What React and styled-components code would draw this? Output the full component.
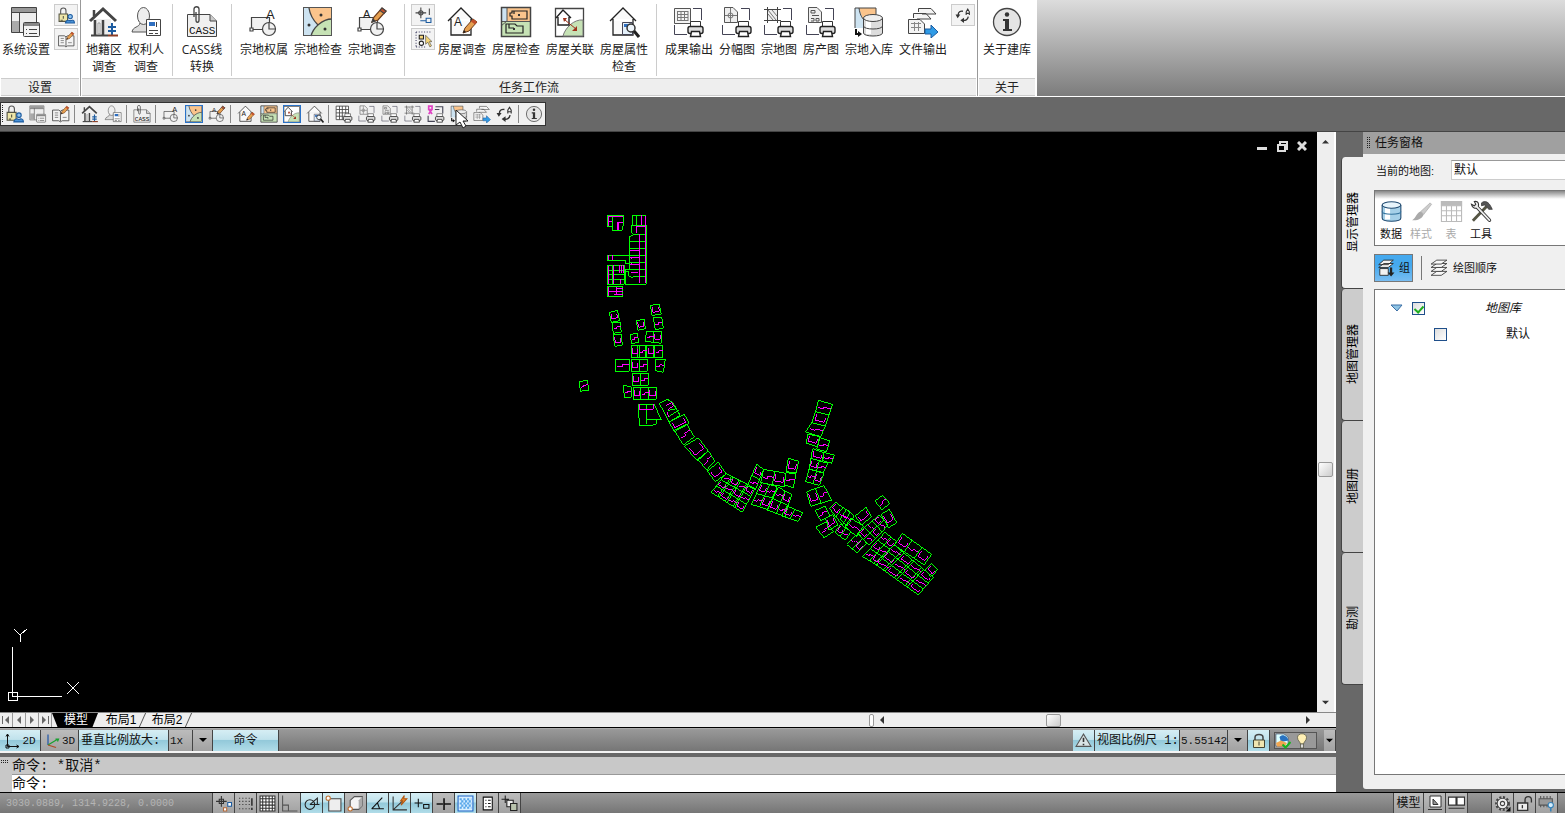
import React from "react";
import styled, { createGlobalStyle } from "styled-components";

const GlobalStyle = createGlobalStyle`
  * {
    box-sizing: border-box;
  }
  body {
    margin: 0;
    background: #686868;
    color: #111;
    font: 12px/16px "Liberation Sans", "Noto Sans CJK SC", sans-serif;
  }
  button, input, select {
    margin: 0;
    padding: 0;
    border: 0;
    border-radius: 0;
    background: none;
    color: inherit;
    font: inherit;
  }
  button, select {
    cursor: pointer;
  }
  svg {
    display: block;
    flex: none;
  }
`;

const mono = `"Liberation Mono", "Noto Sans CJK SC", monospace`;
const raised = "linear-gradient(#bcbcbc, #a2a2a2)";
const lit = "linear-gradient(#d6eef4 0%, #c0e2ec 45%, #93c9da 50%, #b0dce8 100%)";
const track = "linear-gradient(#999, #767676)";
const dots = "conic-gradient(#222 25%, transparent 0) 0 0 / 2px 2px";

/* ---------- page ---------- */
const Page = styled.div`
  display: flex;
  flex-direction: column;
  min-height: 100vh;
`;
const Workspace = styled.div`
  flex: 1;
  display: flex;
  border-top: 1px solid #444;
`;
const Main = styled.main`
  flex: 1;
  min-width: 0;
  display: flex;
  flex-direction: column;
`;

/* ---------- ribbon ---------- */
const Ribbon = styled.header`
  display: flex;
  height: 97px;
  background: linear-gradient(#dcdcdc, #7c7c7c);
  border-bottom: 1px solid #fff;
`;
const Panel = styled.section`
  display: flex;
  flex-direction: column;
  background: #fff;
  border-right: 1px solid #999;
  &:last-child {
    border-right-color: #fff;
  }
`;
const PanelBody = styled.div`
  flex: 1;
  display: flex;
  align-items: flex-start;
  gap: ${(p) => p.$gap || 0}px;
  padding: 4px 2px 0;
`;
const PanelTitle = styled.h2`
  margin: 0 1px;
  height: 18px;
  border-top: 1px solid #ccc;
  border-bottom: 1px solid #ccc;
  background: #eee;
  color: #222;
  font-family: "Noto Sans CJK SC", sans-serif;
  font-size: 12px;
  font-weight: 400;
  line-height: 16px;
  text-align: center;
`;
const RibbonButton = styled.button`
  width: ${(p) => p.$width || 54}px;
  display: flex;
  flex-direction: column;
  align-items: center;
  gap: 3px;
  padding-top: 2px;
  color: #222;
  font-family: "Open Sans", "Noto Sans CJK SC", sans-serif;
  line-height: 17px;
  white-space: pre;
`;
const Divider = styled.span`
  width: 1px;
  height: 72px;
  margin: 0 5px;
  background: #ccc;
`;
const SmallStack = styled.div`
  display: flex;
  flex-direction: column;
  gap: 2px;
  margin-left: 1px;
`;
const SmallButton = styled.button`
  width: 24px;
  height: 22px;
  display: grid;
  place-items: center;
  border: 1px solid #ccc;
  background: #f3f3f3;
`;

/* ---------- tool strip ---------- */
const StripArea = styled.div`
  height: 34px;
  padding-top: 5px;
  display: flex;
  align-items: flex-start;
  background: #686868;
`;
const Strip = styled.div`
  height: 24px;
  display: flex;
  align-items: center;
  border: 1px solid #333;
  background: #f0f0f0;
  &::before {
    content: "";
    width: 2px;
    height: 18px;
    background: ${dots};
  }
`;
const StripButton = styled.button`
  position: relative;
  width: 23px;
  height: 22px;
  display: grid;
  place-items: center;
  > svg:first-child {
    outline: ${(p) => (p.$framed ? "1px solid #2a72c8" : "none")};
    outline-offset: -1px;
  }
`;
const StripSeparator = styled.span`
  width: 1px;
  height: 18px;
  margin: 0 3px 0 2px;
  background: #888;
`;
const Cursor = styled.svg`
  position: absolute;
  left: 8px;
  top: 6px;
  z-index: 1;
`;

/* ---------- drawing area ---------- */
const View = styled.div`
  flex: 1;
  display: flex;
  min-height: 0;
`;
const Canvas = styled.div`
  position: relative;
  flex: 1;
  background: #000;
`;
const Drawing = styled.svg`
  position: absolute;
  inset: 0;
  width: 100%;
  height: 100%;
`;
const AxisMark = styled.svg`
  position: absolute;
  left: 0;
  bottom: 4px;
`;
const WindowControls = styled.div`
  position: absolute;
  right: 5px;
  top: 6px;
  display: flex;
  button {
    width: 20px;
    height: 16px;
    display: grid;
    place-items: center;
  }
`;
const VerticalScroll = styled.div`
  width: 19px;
  display: flex;
  flex-direction: column;
  align-items: center;
  justify-content: space-between;
  padding: 7px 0 6px;
  border-right: 2px solid #fff;
  background: #eee;
`;
const VerticalTrack = styled.div`
  flex: 1;
  display: flex;
  flex-direction: column;
`;
const Spacer = styled.span`
  flex: ${(p) => p.$grow || 1};
`;
const Thumb = styled.span`
  width: 15px;
  height: ${(p) => (p.$flat ? 13 : 15)}px;
  border: 1px solid #999;
  border-radius: 2px;
  background: linear-gradient(135deg, #fff, #ccc);
`;

/* ---------- layout tabs ---------- */
const TabBar = styled.div`
  height: 16px;
  display: flex;
  align-items: center;
  border-top: 1px solid #888;
  border-bottom: 1px solid #000;
  background: #eee;
`;
const TabArrow = styled.button`
  width: 13px;
  height: 14px;
  display: grid;
  place-items: center;
  border-right: 1px solid #999;
`;
const LayoutTab = styled.button`
  position: relative;
  height: 14px;
  width: 46px;
  padding-left: ${(p) => (p.$active ? 2 : 0)}px;
  line-height: 14px;
  color: ${(p) => (p.$active ? "#fff" : "#000")};
  background: ${(p) => (p.$active ? "#000" : "none")};
  clip-path: ${(p) => (p.$active ? "polygon(0 0, 100% 0, 88% 100%, 12% 100%)" : "none")};
  &::after {
    content: "";
    position: absolute;
    right: 1px;
    top: 0;
    height: 14px;
    border-right: 1px solid #555;
    transform: skewX(-24deg);
  }
`;
const HorizontalScroll = styled.div`
  width: 467px;
  margin-left: auto;
  display: flex;
  align-items: center;
  padding-right: 24px;
`;
const Splitter = styled.span`
  width: 5px;
  height: 13px;
  margin-right: 4px;
  border: 1px solid #999;
  border-radius: 2px;
  background: #fff;
`;

/* ---------- scale bar ---------- */
const ScaleBar = styled.div`
  height: 25px;
  padding: 1px 0 0;
  display: flex;
  border-top: 1px solid #aaa;
  border-bottom: 2px solid #f4f4f4;
  background: ${track};
`;
const ScaleButton = styled.button`
  width: ${(p) => p.$width}px;
  display: flex;
  align-items: center;
  justify-content: center;
  gap: 2px;
  border-right: 1px solid #444;
  background: ${(p) => (p.$on ? lit : raised)};
  white-space: nowrap;
  font: 12px/22px ${mono};
`;
const AxisButton = styled(ScaleButton)`
  font-size: 11px;
`;
const ScaleLabel = styled.label`
  width: ${(p) => p.$width}px;
  padding-left: 2px;
  border-right: 1px solid #444;
  background: ${lit};
  font: 12px/22px ${mono};
  white-space: nowrap;
`;
const SelectBox = styled.span`
  position: relative;
  width: ${(p) => p.$width}px;
  display: flex;
  border-right: 1px solid #444;
  background: ${raised};
  select {
    width: 100%;
    padding: 0 18px 0 1px;
    appearance: none;
    font: 11px/22px ${mono};
  }
  svg {
    position: absolute;
    right: 5px;
    top: 6px;
    pointer-events: none;
  }
  &::after {
    content: "";
    position: absolute;
    right: 19px;
    height: 100%;
    border-left: 1px solid #444;
    pointer-events: none;
  }
`;
const RightTools = styled.div`
  display: flex;
  margin-left: auto;
`;
const MarkerGroup = styled.div`
  width: 43px;
  height: 17px;
  margin: 2px 7px 0 4px;
  display: flex;
  gap: 3px;
  border: 1px solid #555;
  background: #999;
`;

/* ---------- command line ---------- */
const Command = styled.form`
  height: 39px;
  display: flex;
  border-top: 4px solid #686868;
  background: #c8c8c8;
`;
const CommandGrip = styled.span`
  width: 8px;
  height: 4px;
  margin: 3px 4px 0 0;
  background: ${dots};
`;
const CommandLines = styled.div`
  flex: 1;
  font: 14px/18px ${mono};
`;
const History = styled.div`
  height: 18px;
  border-bottom: 1px solid #999;
`;
const Prompt = styled.div`
  display: flex;
  height: 17px;
  background: #fff;
  input {
    flex: 1;
    outline: none;
  }
`;

/* ---------- status bar ---------- */
const StatusBar = styled.footer`
  height: 21px;
  display: flex;
  border-top: 1px solid #000;
  background: ${track};
`;
const Coordinates = styled.output`
  width: 212px;
  padding-left: 6px;
  color: #b4b4b4;
  font: 10px/22px ${mono};
`;
const StatusButton = styled.button`
  width: ${(p) => p.$width || 22}px;
  display: grid;
  place-items: center;
  border-left: 1px solid #444;
  background: ${(p) => (p.$on ? lit : raised)};
`;
const StatusRight = styled.div`
  margin-left: auto;
  display: flex;
`;
const StatusGap = styled.span`
  width: ${(p) => p.$width}px;
  border-left: 1px solid #444;
`;

/* ---------- task pane ---------- */
const Side = styled.aside`
  width: 229px;
  padding: 0 0 3px 5px;
  display: flex;
`;
const SideTabs = styled.div`
  width: 22px;
  padding-top: 25px;
`;
const SideTab = styled.button`
  width: 22px;
  height: 132px;
  display: grid;
  place-items: center;
  border: 1px solid #444;
  border-width: 0 0 1px 1px;
  border-radius: 4px 0 0 4px;
  background: ${(p) => (p.$active ? "#f0f0f0" : "#ccc")};
  color: #000;
  span {
    writing-mode: vertical-rl;
    text-orientation: sideways;
    transform: rotate(180deg);
  }
`;
const Pane = styled.div`
  flex: 1;
  min-width: 0;
  display: flex;
  flex-direction: column;
  border-bottom-left-radius: 3px;
  background: #f0f0f0;
  font-size: 11px;
`;
const PaneTitle = styled.h1`
  height: 22px;
  margin: 0;
  display: flex;
  align-items: center;
  gap: 5px;
  padding-left: 3px;
  background: #a0a0a0;
  font-size: 12px;
  font-weight: 400;
  &::before {
    content: "";
    width: 4px;
    height: 12px;
    background: ${dots};
  }
`;
const PaneBody = styled.div`
  flex: 1;
  display: flex;
  flex-direction: column;
  padding: 6px 0 14px 11px;
`;
const MapField = styled.div`
  display: flex;
  align-items: center;
  height: 20px;
  margin-bottom: 10px;
  padding-left: 2px;
  label {
    width: 75px;
    padding-top: 2px;
  }
  select {
    flex: 1;
    height: 20px;
    padding-left: 2px;
    border: 1px solid #ccc;
    border-right: 0;
    border-top-color: #999;
    appearance: none;
    background: #fff;
    font-size: 12px;
  }
`;
const PaneTools = styled.div`
  height: 56px;
  margin-bottom: 8px;
  padding-top: 9px;
  padding-left: 1px;
  display: flex;
  border: 1px solid #777;
  border-right: 0;
  background: linear-gradient(#888, #fff 8px);
`;
const PaneTool = styled.button`
  width: 30px;
  display: flex;
  flex-direction: column;
  align-items: center;
  gap: 3px;
  &:disabled {
    color: #aaa;
  }
`;
const PaneModes = styled.div`
  height: 28px;
  margin-bottom: 7px;
  display: flex;
  align-items: center;
`;
const GroupButton = styled.button`
  width: 39px;
  height: 28px;
  display: flex;
  align-items: center;
  gap: 4px;
  padding-left: 2px;
  border: 1px solid #777;
  background: linear-gradient(#45a9ee 40%, #78bdf2);
`;
const OrderButton = styled.button`
  height: 24px;
  margin-left: 8px;
  padding-left: 8px;
  display: flex;
  align-items: center;
  gap: 5px;
  border-left: 1px solid #777;
`;
const Tree = styled.ul`
  flex: 1;
  margin: 0;
  padding: 5px 0;
  border: 1px solid #777;
  border-right: 0;
  background: #fff;
  list-style: none;
  font-size: 12px;
`;
const TreeItem = styled.li`
  height: 26px;
  display: grid;
  grid-template-columns: ${(p) => (p.$child ? "59px 72px 1fr" : "15px 22px 73px 1fr")};
  align-items: center;
  label {
    font-style: ${(p) => (p.$child ? "normal" : "italic")};
  }
`;
const Check = styled.input`
  position: relative;
  width: 13px;
  height: 13px;
  appearance: none;
  border: 1px solid #1f4f8a;
  background: linear-gradient(135deg, #ddd, #fff);
  &:checked::after {
    content: "";
    position: absolute;
    left: 3px;
    top: 1px;
    width: 4px;
    height: 7px;
    border: solid #1fad1f;
    border-width: 0 2px 2px 0;
    transform: rotate(42deg);
  }
`;

/* ---------- icons, all drawn on a 32 x 32 grid ---------- */
const Pencil = ({ x = 0, y = 0 }) => (
  <g transform={`translate(${x} ${y})`}>
    <path d="M0 14L2 9L10 0L14 3L6 12Z" fill="#e6a050" stroke="#6b3a1a" />
    <path d="M10 0L14 3L12 5.500L8 2.500Z" fill="#c4502c" />
    <path d="M0 14L1 11L3 13Z" fill="#222" />
  </g>
);
const Printer = () => (
  <g>
    <path d="M17.500 21V15.500H27.500V21" fill="#fff" stroke="#333" />
    <rect x="15" y="20.500" width="15" height="7" rx="2" fill="#ddd" stroke="#222" strokeWidth="1.400" />
    <path d="M18.500 25.500H26.500L27.500 30.500H17.500Z" fill="#fff" stroke="#222" strokeWidth="1.400" />
  </g>
);
const Frame = () => (
  <path d="M20 2.500H28.500V14M1.500 19V28.500H14" fill="none" stroke="#445" />
);
const HouseShape = () => (
  <path d="M2 15L15 2L28 15M5 13V29H25V13" fill="#fafafa" stroke="#222" strokeWidth="1.300" />
);
const ShapeLines = ({ children }) => (
  <g fill="#f1f1f1" stroke="#444" strokeWidth="1.200">
    <path d="M3.500 11.500H21.500V23.500H3.500Z" />
    <circle cx="21" cy="23" r="6.500" />
    <path d="M21 16.500V23H27.500" fill="none" />
    <path d="M2 22H5V25H2Z" fill="#fff" />
    {children}
  </g>
);
const Letter = ({ x, y, size = 12 }) => (
  <text x={x} y={y} fontSize={size} fill="#222" stroke="none" fontFamily="Liberation Sans">
    A
  </text>
);
const MapTile = () => (
  <g>
    <rect x="2" y="2" width="28" height="28" fill="#cde3f1" />
    <path d="M7 2H30V13C25 13 20 16 16 19C12 15 8 9 7 2Z" fill="#fac48c" />
    <path d="M9 30C11 22 20 13 30 13V30Z" fill="#c6e2b5" />
    <path d="M7 2C8 9 12 15 16 19M9 30C11 22 20 13 30 13" fill="none" stroke="#444" strokeWidth="1.300" />
    <g fill="#333">
      <circle cx="19" cy="9" r="1.500" />
      <circle cx="7" cy="19" r="1.500" />
      <circle cx="23" cy="23" r="1.500" />
    </g>
    <rect x="1.500" y="1.500" width="28" height="28" fill="none" stroke="#555" />
  </g>
);
const Refresh = () => (
  <g>
    <path d="M6 15C6 9 10 7 15 8M25 18C24 24 19 26 15 25" fill="none" stroke="#333" strokeWidth="2.500" />
    <path d="M1 14H10L5 21ZM17 20L10 25L17 30Z" fill="#333" />
    <path d="M21 15V9L24 4L27 9V15M21 12H27" fill="none" stroke="#333" strokeWidth="2" />
  </g>
);

const icons = {
  settings: (
    <g stroke="#444">
      <path d="M1.500 1.500H26.500V26.500H1.500Z" fill="#eee" />
      <path d="M2 2H26V6H2Z" fill="#999" stroke="none" />
      <path d="M2 15H9V26H2Z" fill="#aaa" stroke="none" />
      <path d="M9.500 6V26M2 6.500H26" />
      <rect x="13.500" y="16.500" width="16" height="14" rx="1" fill="#f4f4f4" />
      <path d="M14 17H29V20H14Z" fill="#888" stroke="none" />
      <path d="M19 23.500H27M19 27.500H27M16 23.500H17M16 27.500H17" />
    </g>
  ),
  lockUser: (
    <g strokeWidth="2">
      <path d="M5 14V7C5 0 15 0 15 7V14" fill="none" stroke="#555" />
      <path d="M2 13H18V27H2Z" fill="#eee6a8" stroke="#554" />
      <path d="M10 17V22M5 25H9" stroke="#554" />
      <circle cx="23" cy="18" r="4" fill="#8fc2ee" stroke="#1d5ca0" />
      <path d="M14 30C15 24 20 24 23 26C26 24 31 24 31 30Z" fill="#4a93d8" stroke="#1d5ca0" />
    </g>
  ),
  book: (
    <g>
      <path d="M1 9H12L15 11L18 9H30V28H18L15 30L12 28H1ZM15 11V29" fill="#f4f4f4" stroke="#444" strokeWidth="1.500" />
      <path d="M5 14H11M5 18H11M5 22H11M19 22H26" stroke="#777" strokeWidth="1.500" />
      <Pencil x={16} y={2} />
    </g>
  ),
  house: (
    <g>
      <path d="M5 13H23V29H5Z" fill="#eee" />
      <path d="M2 15L15 3L28 15" fill="none" stroke="#444" strokeWidth="3" />
      <path d="M6 4V10M7 14V29M15 14V29" stroke="#444" strokeWidth="2.500" />
      <path d="M3 29.500H20" stroke="#444" strokeWidth="2" />
      <path d="M10 17H12V28H10Z" fill="#fff" stroke="#999" />
      <path d="M24 17V29M20 21H28M20 25H28" stroke="#1d5ca0" strokeWidth="2" />
      <path d="M20 29.500H30" stroke="#8d3d24" strokeWidth="2" />
    </g>
  ),
  person: (
    <g>
      <path d="M2 26C3 20 9 22 10 17H17C18 22 22 21 23 26Z" fill="#ddd" stroke="#555" />
      <ellipse cx="13.500" cy="10" rx="6" ry="8.500" fill="#eee" stroke="#555" />
      <path d="M16.500 13.500H30.500V29.500H16.500Z" fill="#fff" stroke="#444" />
      <path d="M19 16H25V20H19Z" fill="#2f6fc0" />
      <path d="M26.500 16V21M19 24.500H28M19 27.500H23M25 27.500H28" stroke="#444" />
    </g>
  ),
  cass: (
    <g>
      <path d="M1.500 8.500H24L30.500 15V30.500H1.500Z" fill="#f0f0f0" stroke="#444" />
      <path d="M24 8.500V15H30.500" fill="#ccc" stroke="#444" />
      <path d="M8 11V3C8 0 13 0 13 3V14C13 17 10 17 10 14V6" fill="none" stroke="#444" strokeWidth="1.300" />
      <text x="3" y="28" fontSize="11" fontFamily="Liberation Mono" fill="#111">
        CASS
      </text>
    </g>
  ),
  ownership: (
    <ShapeLines>
      <Letter x={18} y={13} size={13} />
    </ShapeLines>
  ),
  parcelCheck: <MapTile />,
  parcelSurvey: (
    <ShapeLines>
      <Letter x={7} y={12} size={11} />
      <Pencil x={16} y={2} />
    </ShapeLines>
  ),
  crosshair: (
    <g fill="none" stroke="#444" strokeWidth="2">
      <path d="M11 1V21M1 11H21M27 3V15" />
      <circle cx="11" cy="11" r="4" />
      <path d="M10 26H20M21 21H30V29H21Z" stroke="#1d5ca0" />
    </g>
  ),
  pick: (
    <g>
      <path d="M2 2H30M2 30H20M2 2V30" fill="none" stroke="#446" strokeWidth="2" strokeDasharray="2 3" />
      <path d="M8 8H16V15H8Z" fill="#f6d67a" stroke="#222" strokeWidth="2" />
      <circle cx="12" cy="23" r="4" fill="#fff" stroke="#222" strokeWidth="2" />
      <path d="M20 8V25L24 21L28 30L31 28L27 20H32Z" fill="#f6d67a" stroke="#333" />
    </g>
  ),
  houseSurvey: (
    <g>
      <HouseShape />
      <Letter x={8} y={20} size={12} />
      <Pencil x={17} y={13} />
    </g>
  ),
  houseCheck: (
    <g>
      <path d="M1.500 1.500H30.500V15H1.500Z" fill="#fac48c" />
      <path d="M1.500 1.500H7V18H1.500Z" fill="#cde3f1" />
      <path d="M1.500 15H30.500V30.500H1.500Z" fill="#c6e2b5" />
      <path d="M1 15.500H30M7 2V15L1 20" stroke="#555" fill="none" />
      <path d="M12 5H27V13H12V10H10V7H12ZM14 5V8M6 18H15L17 20H23V27H6ZM9 18V22H14" fill="none" stroke="#222" strokeWidth="1.200" />
      <path d="M18 8H20V10H18ZM13 22H15V24H13Z" fill="#333" />
      <path d="M1.500 1.500H30.500V30.500H1.500Z" fill="none" stroke="#444" strokeWidth="1.500" />
    </g>
  ),
  houseLink: (
    <g>
      <path d="M1.500 2.500H29.500V30.500H1.500Z" fill="#fff" stroke="#444" strokeWidth="1.300" />
      <path d="M9 30C11 22 20 13 29 14V30Z" fill="#c6e2b5" stroke="#777" />
      <path d="M2 12L9 4L17 12M4 11V19H15V11" fill="#fff" stroke="#222" strokeWidth="1.400" />
      <path d="M11 14L22 23" stroke="#a0321c" />
      <path d="M9 12H13L10 16ZM23 20V25H18Z" fill="#a0321c" />
    </g>
  ),
  houseInfo: (
    <g>
      <HouseShape />
      <path d="M14.500 16.500H24.500V28.500H14.500Z" fill="#e4f0fa" stroke="#445" />
      <path d="M16 18H22V21H16Z" fill="#2f6fc0" />
      <circle cx="23" cy="22" r="4" fill="#eef5fb" stroke="#333" strokeWidth="1.500" />
      <path d="M26 25L31 31" stroke="#222" strokeWidth="3" />
    </g>
  ),
  output: (
    <g>
      <Frame />
      <path d="M1.500 2.500H17.500V17.500H1.500Z" fill="#f4f4f4" stroke="#555" />
      <path d="M4 5.500H15M4 8.500H15M4 11.500H15M4 14.500H15M4.500 5V15M8 5V15M11.500 5V15M15 5V15" stroke="#777" />
      <Printer />
    </g>
  ),
  sheetMap: (
    <g>
      <Frame />
      <path d="M3.500 1.500H12L16.500 6V16.500H3.500Z" fill="#eee" stroke="#555" />
      <path d="M4 9.500H16M9.500 2V16" stroke="#777" />
      <circle cx="9.500" cy="9.500" r="2.500" fill="none" stroke="#777" />
      <Printer />
    </g>
  ),
  parcelMap: (
    <g>
      <Frame />
      <path d="M5 4H14V14H5Z" fill="#eee" />
      <path d="M1 3.500H18M1 14.500H18M4.500 1V17M14.500 1V17" fill="none" stroke="#444" />
      <path d="M5 8L10 14M5 4L13 14M9 4L14 10" stroke="#777" />
      <Printer />
    </g>
  ),
  estateMap: (
    <g>
      <Frame />
      <path d="M3.500 1.500H12L16.500 6V16.500H3.500Z" fill="#eee" stroke="#555" />
      <path d="M6 4.500H10V7H6ZM7 9.500H14M6 12.500H9V15H6M11 12.500H14V15H11Z" fill="none" stroke="#555" />
      <Printer />
    </g>
  ),
  database: (
    <g>
      <path d="M2 2H23V22H2Z" fill="#cde3f1" />
      <path d="M6 2H23V13L11 16Z" fill="#fac48c" />
      <path d="M2 22V2H23V9M6 2C7 10 10 13 12 15" fill="none" stroke="#444" />
      <path d="M3 23V28H6" fill="none" stroke="#111" strokeWidth="2" />
      <path d="M5 25L9 28L5 31Z" fill="#111" />
      <path d="M10.500 12V27C10.500 31 29.500 31 29.500 27V12" fill="#ddd" stroke="#444" />
      <path d="M13 12V28H18V12Z" fill="#fff" />
      <ellipse cx="20" cy="12" rx="9.500" ry="3.500" fill="#eee" stroke="#444" />
      <path d="M10.500 20C10.500 24 29.500 24 29.500 20" fill="none" stroke="#444" />
    </g>
  ),
  files: (
    <g fill="#f4f4f4" stroke="#444">
      <path d="M11.500 6V2.500H24L29 8H15M6.500 12V7.500H19L24 13H10" />
      <path d="M1.500 13.500H13L17.500 18V27.500H1.500Z" />
      <path d="M4 17.500H14M4 21.500H14M7.500 16V25M11.500 16V25" stroke="#888" />
      <path d="M18 23H24V19L31 26L24 32V28H18Z" fill="#2f9be6" stroke="#1d5ca0" />
    </g>
  ),
  refresh: <Refresh />,
  info: (
    <g>
      <circle cx="16" cy="16" r="13.500" fill="#e4e4e4" stroke="#444" strokeWidth="1.300" />
      <circle cx="16" cy="8.500" r="2.200" fill="#333" />
      <path d="M12 13H18V23H21V25H12V23H14V15H12Z" fill="#333" />
    </g>
  ),
  gridPrint: (
    <g>
      <path d="M2 2H24V26H2ZM2 8H24M2 14H24M2 20H24M8 2V26M13 2V26M19 2V26" fill="#fff" stroke="#444" strokeWidth="1.500" />
      <Printer />
    </g>
  ),
  ribbonPrint: (
    <g>
      <path d="M15 3H28V15M2 19V29H14M14 8H22" fill="none" stroke="#445" strokeWidth="2" />
      <path d="M3 2H9V8H3ZM4 9L9 16M8 9L3 16" fill="none" stroke="#e044c4" strokeWidth="3" />
      <Printer />
    </g>
  ),
  dataStore: (
    <g>
      <path d="M3 7V25C3 31 29 31 29 25V7" fill="#a5d0e8" stroke="#1f4a70" strokeWidth="1.500" />
      <path d="M7 10V27H14V11Z" fill="#fff" />
      <ellipse cx="16" cy="7" rx="13" ry="4.500" fill="#e7f4fb" stroke="#1f4a70" strokeWidth="1.500" />
      <path d="M3 16C3 21 29 21 29 16" fill="none" stroke="#35759f" strokeWidth="1.500" />
    </g>
  ),
  brush: (
    <g>
      <path d="M15 16L28 4L30 6L19 20Z" fill="#ccc" stroke="#aaa" />
      <path d="M3 28C8 26 9 17 15 16L19 20C17 26 10 29 3 28Z" fill="#aaa" />
    </g>
  ),
  table: (
    <g stroke="#bbb" strokeWidth="1.500">
      <path d="M2 2H30V30H2Z" fill="#fff" />
      <path d="M2 2H30V8H2Z" fill="#bbb" />
      <path d="M2 15H30M2 22H30M9 8V30M16 8V30M23 8V30" />
    </g>
  ),
  tools: (
    <g>
      <path d="M23 9L4 29" stroke="#554" strokeWidth="4" />
      <path d="M16 4C21 0 26 3 29 9L31 13L26 13L23 9L20 7L16 8Z" fill="#555" stroke="#333" />
      <path d="M9 9L27 28" stroke="#333" strokeWidth="5" strokeLinecap="round" />
      <path d="M2 6L6 8L8 6L6 2C12 1 13 6 11 10C8 13 3 11 2 6Z" fill="#eee" stroke="#333" strokeWidth="1.500" />
      <path d="M9 9L27 28" stroke="#eee" strokeWidth="2.500" strokeLinecap="round" />
    </g>
  ),
  group: (
    <g fill="#f2f2f2" stroke="#222" strokeWidth="1.500">
      <path d="M3 10L12 2H29L20 10ZM3 15L12 8H29L20 15Z" />
      <path d="M5 17H20V29H5Z" />
      <path d="M23 15V24H19L25 31L31 24H27V15Z" fill="#222" stroke="none" />
    </g>
  ),
  layers: (
    <g fill="#f8f8f8" stroke="#333" strokeWidth="1.500">
      <path d="M2 29L12 22H30L20 29Z" />
      <path d="M2 22L12 15H30L20 22Z" />
      <path d="M2 15L12 8H30L20 15Z" />
      <path d="M2 9L12 2H30L20 9Z" />
    </g>
  ),
  axes2d: <path d="M7 3V27H29M4 7L7 2L10 7M25 24L30 27L25 30M4 24H10V30H4Z" fill="none" stroke="#111" strokeWidth="2" />,
  axes3d: (
    <g fill="none" strokeWidth="2.500">
      <path d="M8 24V3" stroke="#2459a8" />
      <path d="M8 24L28 12M23 12H29L27 17" stroke="#18a030" />
      <path d="M8 24L24 29" stroke="#b04a24" />
    </g>
  ),
  warning: (
    <g>
      <path d="M16 4L30 27H2Z" fill="#d9e4e6" stroke="#555" strokeWidth="2" />
      <path d="M16 11V19M16 22V25" stroke="#333" strokeWidth="3" />
    </g>
  ),
  lock: (
    <g strokeWidth="2">
      <path d="M8 14V9C8 1 24 1 24 9V14" fill="none" stroke="#444" strokeWidth="3" />
      <path d="M5 14H27V29H5Z" fill="#efe5b0" stroke="#443" />
      <path d="M16 17V25" stroke="#443" />
    </g>
  ),
  globe: (
    <g>
      <path d="M2 2H18L26 8V26H2Z" fill="#dff" stroke="#235" />
      <path d="M9 8C15 0 25 6 27 15L12 18Z" fill="#2872c0" />
      <path d="M2 20L12 15L24 20L19 27H4Z" fill="#f2a650" />
      <path d="M15 23L21 29L31 18" fill="none" stroke="#17b520" strokeWidth="4" />
    </g>
  ),
  bulb: (
    <g stroke="#554" strokeWidth="1.500">
      <path d="M13 22C12 17 7 15 7 9C7 -1 25 -1 25 9C25 15 20 17 19 22Z" fill="#fff0b5" />
      <path d="M13 22H19V30H13Z" fill="#ddd" />
    </g>
  ),
  infer: (
    <g fill="none" stroke="#333" strokeWidth="2">
      <path d="M12 2V22M2 12H22M8 8H16V16H8Z" />
      <path d="M24 14H31V21H24Z" stroke="#1d5ca0" fill="#fff" />
      <path d="M16 24H22V30H16Z" stroke="#b56a3a" fill="#fff" />
    </g>
  ),
  snapGrid: (
    <g fill="none" stroke="#333" strokeWidth="2" strokeDasharray="2 4">
      <path d="M4 6H24M4 12H24M4 18H24M4 26H24" />
      <path d="M28 6V20M28 24V28" strokeDasharray="none" strokeWidth="3" />
    </g>
  ),
  grid: <path d="M2 2H30V30H2ZM2 7H30M2 13H30M2 19H30M2 25H30M7 2V30M13 2V30M19 2V30M25 2V30" fill="#fff" stroke="#333" strokeWidth="2" />,
  ortho: <path d="M3 1V30H31M3 19H14V30" fill="none" stroke="#555" strokeWidth="2" />,
  polar: (
    <g fill="none" stroke="#222" strokeWidth="2">
      <circle cx="13" cy="18" r="9" />
      <path d="M13 18H31M13 18L27 6V18" />
    </g>
  ),
  osnap: (
    <g>
      <path d="M7 7H30V30H7Z" fill="#eee" stroke="#444" strokeWidth="2" />
      <circle cx="6" cy="6" r="4" fill="#fff" stroke="#c07030" strokeWidth="2" />
    </g>
  ),
  osnap3d: (
    <g>
      <path d="M6 10L14 3H29V20L22 27H6Z" fill="#f4f4f4" stroke="#555" strokeWidth="2" />
      <path d="M22 27V10L29 3V20Z" fill="#aaa" />
      <circle cx="6" cy="26" r="4" fill="#fff" stroke="#c07030" strokeWidth="2" />
    </g>
  ),
  angle: <path d="M5 26L25 5M5 26H28M16 15L20 26" fill="none" stroke="#111" strokeWidth="2" />,
  dynamicUcs: (
    <g fill="none" stroke="#333" strokeWidth="2">
      <path d="M4 3V28H30M4 28L23 10" />
      <path d="M25 1L18 11H22L19 19L30 7H24Z" fill="#f08a2a" stroke="#b05a18" />
    </g>
  ),
  dynamicInput: <path d="M3 15H18M10 7V23M20 18H30V25H20Z" fill="none" stroke="#111" strokeWidth="2" />,
  lineWeight: <path d="M3 17H15M17 6V28M17 17H30" fill="none" stroke="#111" strokeWidth="3" />,
  transparency: (
    <g>
      <path d="M2 2H30V30H2Z" fill="#d8efff" stroke="#1d62c8" strokeWidth="2" />
      <path d="M5 8H27M8 12H27M5 16H27M8 20H27M5 24H27" stroke="#5aa8ea" strokeWidth="4" strokeDasharray="4 3" />
    </g>
  ),
  properties: (
    <g stroke="#111" strokeWidth="2">
      <path d="M8 4H25V28H8Z" fill="#fff" />
      <path d="M12 10H14M17 10H22M12 16H14M17 16H22M12 22H14M17 22H22" />
    </g>
  ),
  cycling: (
    <g fill="#eee" stroke="#222" strokeWidth="2">
      <path d="M8 1V15M1 8H15M11 10H23V22H11Z" />
      <path d="M18 16H30V29H18Z" fill="#b9c3ad" />
    </g>
  ),
  modelSpace: (
    <g stroke="#333" strokeWidth="2">
      <path d="M6 2H28V24H6Z" fill="#fff" />
      <path d="M12 8V19H22Z" fill="#999" />
      <path d="M2 29H30" />
    </g>
  ),
  viewports: (
    <g fill="#fff" stroke="#333" strokeWidth="2">
      <path d="M1 4H15V19H1ZM17 4H31V19H17ZM1 25H31" />
    </g>
  ),
  gear: (
    <g stroke="#444" fill="#eee" strokeWidth="2">
      <circle cx="16" cy="16" r="12" strokeDasharray="4 3" strokeWidth="4" />
      <circle cx="16" cy="16" r="10" />
      <circle cx="16" cy="16" r="4" />
      <path d="M31 22V31H22Z" fill="#111" stroke="none" />
    </g>
  ),
  unlock: (
    <g strokeWidth="2.500" stroke="#333">
      <path d="M17 15V9C17 1 29 1 29 9V14" fill="none" />
      <path d="M3 15H22V29H3Z" fill="#eee" />
      <path d="M12 19V25" />
    </g>
  ),
  hardware: (
    <g stroke="#555" strokeWidth="2">
      <path d="M2 7H27V19H2Z" fill="#999" />
      <path d="M5 2V7M11 2V7M17 2V7M23 2V7M5 19V23M11 19V23M17 19V23" />
      <circle cx="24" cy="19" r="5" fill="#d5edfb" stroke="#3682b8" />
      <path d="M24 24V31" stroke="#3682b8" strokeWidth="3" />
    </g>
  ),
};

const Icon = ({ name, size = 32 }) => (
  <svg width={size} height={size} viewBox="0 0 32 32" aria-hidden="true">
    {icons[name]}
  </svg>
);

const arrows = {
  up: "M0 5L4 1L8 5Z",
  down: "M0 2L4 6L8 2Z",
  left: "M6 0V8L2 4Z",
  right: "M2 0V8L6 4Z",
  first: "M7 0V8L3 4ZM0 0H1V8H0Z",
  last: "M1 0V8L5 4ZM7 0H8V8H7Z",
};
const Arrow = ({ to, size = 8, color = "#333" }) => (
  <svg width={size} height={size} viewBox="0 0 8 8" aria-hidden="true">
    <path d={arrows[to]} fill={color} />
  </svg>
);

/* ---------- ribbon and strip contents ---------- */
const workflow = [
  { icon: "house", label: "地籍区\n调查", width: 42 },
  { icon: "person", label: "权利人\n调查", width: 42 },
  "|",
  { icon: "cass", label: "CASS线\n转换", width: 48 },
  "|",
  { icon: "ownership", label: "宗地权属" },
  { icon: "parcelCheck", label: "宗地检查" },
  { icon: "parcelSurvey", label: "宗地调查" },
  "|",
  { stack: ["crosshair", "pick"] },
  { icon: "houseSurvey", label: "房屋调查" },
  { icon: "houseCheck", label: "房屋检查" },
  { icon: "houseLink", label: "房屋关联" },
  { icon: "houseInfo", label: "房屋属性\n检查" },
  "|",
  { icon: "output", label: "成果输出" },
  { icon: "sheetMap", label: "分幅图", width: 42 },
  { icon: "parcelMap", label: "宗地图", width: 42 },
  { icon: "estateMap", label: "房产图", width: 42 },
  { icon: "database", label: "宗地入库" },
  { icon: "files", label: "文件输出" },
  { stack: ["refresh"] },
];

const strip = [
  "lockUser", "settings", "book", "|",
  "house", "person", "|",
  "cass", "|",
  "ownership", "parcelCheck", "parcelSurvey", "|",
  "houseSurvey", "houseCheck", "houseLink", "houseInfo", "|",
  "gridPrint", "sheetMap", "estateMap", "parcelMap", "ribbonPrint", "database", "files", "refresh", "|",
  "info",
];

const statusTools = [
  ["infer"], ["snapGrid"], ["grid"], ["ortho"], ["polar", true], ["osnap", true], ["osnap3d"],
  ["angle", true], ["dynamicUcs", true], ["dynamicInput", true], ["lineWeight"],
  ["transparency", true], ["properties"], ["cycling"],
];

const RibbonItem = ({ item }) => {
  if (item === "|") return <Divider />;
  if (item.stack) {
    return (
      <SmallStack>
        {item.stack.map((name) => (
          <SmallButton key={name} aria-label={name}>
            <Icon name={name} size={17} />
          </SmallButton>
        ))}
      </SmallStack>
    );
  }
  return (
    <RibbonButton $width={item.width}>
      <Icon name={item.icon} />
      {item.label}
    </RibbonButton>
  );
};

/* ---------- parcels ---------- */
// corners run clockwise from top left, then columns and rows
const north = [
  [241, 316, 268, 313, 274, 343, 246, 346, 1, 1],
  [250, 354, 275, 351, 280, 384, 256, 390, 1, 1],
  [199, 362, 222, 358, 226, 386, 204, 391, 1, 1],
  [181, 403, 202, 400, 206, 428, 184, 430, 1, 1],
  [118, 337, 142, 331, 149, 362, 124, 367, 1, 1],
  [126, 369, 150, 366, 154, 396, 130, 400, 1, 1],
  [130, 405, 154, 403, 157, 436, 134, 439, 1, 1],
  [229, 394, 274, 394, 274, 430, 226, 424, 2, 1],
  [184, 436, 278, 436, 278, 472, 184, 472, 4, 1],
  [136, 478, 178, 478, 178, 514, 136, 514, 1, 1],
  [184, 478, 232, 478, 232, 514, 184, 514, 2, 1],
  [256, 478, 286, 478, 280, 517, 256, 512, 1, 1],
  [187, 520, 235, 520, 235, 556, 187, 556, 2, 1],
  [160, 556, 184, 560, 184, 592, 163, 592, 1, 1],
  [190, 562, 259, 562, 259, 598, 190, 598, 3, 1],
  [28, 545, 52, 541, 56, 570, 31, 574, 1, 1],
];
const south = [
  [57, 96, 103, 73, 118, 100, 73, 125, 1, 1],
  [73, 121, 110, 103, 133, 140, 100, 165, 1, 1],
  [103, 169, 145, 143, 175, 183, 143, 212, 1, 1],
  [143, 208, 175, 183, 195, 213, 170, 240, 1, 1],
  [172, 243, 205, 217, 228, 252, 196, 275, 1, 1],
  [228, 250, 315, 295, 277, 367, 184, 307, 4, 3],
  [320, 223, 341, 238, 316, 299, 292, 288, 1, 2],
  [341, 238, 408, 250, 402, 290, 332, 278, 2, 1],
  [415, 205, 446, 214, 438, 249, 408, 245, 1, 1],
  [408, 248, 438, 252, 430, 293, 402, 285, 1, 1],
  [335, 278, 382, 290, 352, 358, 304, 343, 2, 2],
  [385, 292, 425, 313, 405, 380, 352, 360, 2, 2],
  [411, 348, 458, 368, 445, 394, 395, 378, 2, 1],
  [505, 31, 548, 43, 537, 75, 497, 65, 1, 1],
  [497, 65, 537, 75, 526, 108, 485, 98, 1, 1],
  [485, 98, 526, 108, 512, 140, 467, 126, 1, 1],
  [473, 132, 509, 140, 502, 170, 469, 160, 1, 1],
  [510, 143, 539, 153, 530, 185, 500, 178, 1, 1],
  [488, 176, 522, 188, 516, 214, 483, 205, 1, 1],
  [522, 188, 553, 195, 545, 220, 518, 212, 1, 1],
  [483, 205, 533, 220, 520, 248, 477, 237, 2, 1],
  [477, 237, 522, 250, 508, 286, 467, 275, 2, 1],
  [470, 305, 522, 287, 545, 330, 482, 349, 2, 1],
  [495, 362, 525, 348, 540, 378, 512, 392, 1, 1],
  [527, 385, 548, 374, 564, 405, 537, 420, 1, 1],
  [497, 411, 530, 396, 550, 425, 522, 443, 1, 1],
  [557, 337, 600, 367, 577, 405, 538, 355, 2, 1],
  [590, 358, 613, 378, 590, 408, 570, 388, 1, 1],
  [615, 378, 648, 352, 665, 380, 635, 405, 1, 1],
  [603, 385, 640, 408, 620, 440, 585, 410, 1, 1],
  [572, 403, 603, 425, 586, 451, 555, 427, 2, 1],
  [625, 430, 650, 460, 622, 489, 590, 463, 2, 1],
  [688, 375, 715, 405, 658, 465, 622, 430, 2, 3],
  [675, 333, 698, 316, 719, 340, 696, 360, 1, 1],
  [693, 373, 718, 358, 740, 398, 716, 413, 1, 1],
  [705, 427, 740, 455, 680, 525, 638, 500, 2, 3],
  [757, 430, 845, 493, 822, 525, 733, 465, 3, 1],
  [733, 465, 850, 562, 805, 615, 672, 520, 4, 3],
  [845, 520, 862, 538, 845, 562, 825, 540, 1, 1],
];

const pointIn = ([ax, ay, bx, by, cx, cy, dx, dy], u, v) => {
  const x = (1 - v) * (ax + (bx - ax) * u) + v * (dx + (cx - dx) * u);
  const y = (1 - v) * (ay + (by - ay) * u) + v * (dy + (cy - dy) * u);
  return `${Math.round(x)} ${Math.round(y)}`;
};

const boundaries = (block) => {
  const [cols, rows] = block.slice(8);
  let d = "";
  for (let i = 0; i <= cols; i++) {
    d += `M${pointIn(block, i / cols, 0)}L${pointIn(block, i / cols, 1)}`;
    // neighbouring plots in the large blocks keep a narrow alley
    if (i > 0 && i < cols && cols > 3) {
      const u = i / cols - 0.05;
      d += `M${pointIn(block, u, 0)}L${pointIn(block, u, 1)}`;
    }
  }
  for (let j = 0; j <= rows; j++) {
    d += `M${pointIn(block, 0, j / rows)}L${pointIn(block, 1, j / rows)}`;
  }
  return d;
};

const buildings = (block, seed) => {
  const [cols, rows] = block.slice(8);
  let d = "";
  for (let i = 0; i < cols; i++) {
    for (let j = 0; j < rows; j++) {
      const at = (u, v) => pointIn(block, (i + u) / cols, (j + v) / rows);
      d +=
        (i + j + seed) % 2
          ? `M${at(0.1, 0.6)}L${at(0.5, 0.6)}L${at(0.5, 0.45)}L${at(1, 0.45)}`
          : `M${at(0.15, 0.2)}L${at(0.15, 0.7)}L${at(0.85, 0.7)}L${at(0.85, 0.3)}`;
    }
  }
  return d;
};

const Blocks = ({ blocks }) => (
  <>
    <path d={blocks.map(boundaries).join("")} stroke="#0f0" />
    <path d={blocks.map(buildings).join("")} stroke="#f0f" />
  </>
);

const Parcels = () => (
  <Drawing fill="none" strokeWidth="3" shapeRendering="crispEdges" aria-label="宗地图">
    <g transform="translate(570 68) scale(.33333)">
      <path
        stroke="#0f0"
        d="M112 46H160V79H157V91H127V79H112ZM127 46V79M187 46H227V76H187ZM199 46V76M214 46V76M184 76H229V253H166V208H178V109L190 106V103H229M184 76V95L187 103M178 124H229M178 145H229M178 166H229M178 187H229M178 208H229M166 214H175V226L184 232L196 229H229M112 166H178V190H166V181H112ZM112 196H163V253H112ZM112 211H163M112 223H163M112 238H163M127 196V253M112 259H158V289H112ZM205 613H253L274 660H259V673L244 676H208ZM229 613V673M232 660H258M268 610L293 598L308 607L330 645M268 610L297 666M293 652L326 630"
      />
      <path
        stroke="#f0f"
        d="M115 49H160M115 49V79M115 64H127M142 91V67H160M145 91V67M199 79V100M214 46V76M199 79H226M208 103V250M226 49V250M181 151H208M181 172H208M181 193H208M184 154V151M184 172V178M184 190V196M184 217H205M115 166V181M127 166V181M130 196V253M148 196V220M154 196V220M160 196V220M151 238V253M115 199V253M115 262V289M115 274H139M139 262V286M139 265H158M133 274H158M133 283H158M208 613V628H250V613"
      />
      <Blocks blocks={north} />
    </g>
    <g transform="translate(650 258) scale(.33333)">
      <path stroke="#0f0" d="M28 40L52 28L67 37L90 76L57 96ZM54 61L82 56" />
      <path stroke="#f0f" d="M47 47L65 38L70 48L55 58M51 65L57 82" />
      <Blocks blocks={south} />
    </g>
  </Drawing>
);

export default function App() {
  return (
    <Page>
      <GlobalStyle />
      <Ribbon>
        <Panel>
          <PanelBody $gap={3}>
            <RibbonButton $width={48}>
              <Icon name="settings" />
              系统设置
            </RibbonButton>
            <SmallStack>
              <SmallButton aria-label="用户权限">
                <Icon name="lockUser" size={17} />
              </SmallButton>
              <SmallButton aria-label="字典">
                <Icon name="book" size={17} />
              </SmallButton>
            </SmallStack>
          </PanelBody>
          <PanelTitle>设置</PanelTitle>
        </Panel>
        <Panel>
          <PanelBody>
            {workflow.map((item, i) => (
              <RibbonItem key={i} item={item} />
            ))}
          </PanelBody>
          <PanelTitle>任务工作流</PanelTitle>
        </Panel>
        <Panel>
          <PanelBody>
            <RibbonButton>
              <Icon name="info" />
              关于建库
            </RibbonButton>
          </PanelBody>
          <PanelTitle>关于</PanelTitle>
        </Panel>
      </Ribbon>

      <StripArea>
        <Strip>
          {strip.map((name, i) =>
            name === "|" ? (
              <StripSeparator key={i} />
            ) : (
              <StripButton
                key={i}
                aria-label={name}
                $framed={name === "parcelCheck" || name === "houseLink"}
              >
                <Icon name={name} size={18} />
                {name === "database" && (
                  <Cursor width="14" height="20" viewBox="0 0 14 20">
                    <path d="M1 1V16L5 13L8 19L11 17L8 12H13Z" fill="#fff" stroke="#222" />
                  </Cursor>
                )}
              </StripButton>
            )
          )}
        </Strip>
      </StripArea>

      <Workspace>
        <Main>
          <View>
            <Canvas>
              <Parcels />
              <AxisMark width="90" height="90" fill="none" stroke="#fff" shapeRendering="crispEdges">
                <path d="M12 29V78M8 74H17V82H8ZM12 78H62M14 11L20 17L27 11M20 17V24M67 64L79 76M79 64L67 76" />
              </AxisMark>
              <WindowControls>
                <button aria-label="最小化">
                  <svg width="10" height="10">
                    <path d="M0 6H10V9H0Z" fill="#ddd" />
                  </svg>
                </button>
                <button aria-label="还原">
                  <svg width="11" height="11" fill="none" stroke="#ddd" strokeWidth="2">
                    <path d="M3 3V1H10V8H8M1 4H8V10H1Z" />
                  </svg>
                </button>
                <button aria-label="关闭">
                  <svg width="10" height="10">
                    <path d="M1 1L9 9M9 1L1 9" stroke="#ddd" strokeWidth="3" />
                  </svg>
                </button>
              </WindowControls>
            </Canvas>
            <VerticalScroll>
              <Arrow to="up" size={7} />
              <VerticalTrack>
                <Spacer $grow={142} />
                <Thumb />
                <Spacer $grow={100} />
              </VerticalTrack>
              <Arrow to="down" size={7} />
            </VerticalScroll>
          </View>

          <TabBar>
            {["first", "left", "right", "last"].map((to) => (
              <TabArrow key={to} aria-label={to}>
                <Arrow to={to} color="#666" />
              </TabArrow>
            ))}
            <LayoutTab $active>模型</LayoutTab>
            <LayoutTab>布局1</LayoutTab>
            <LayoutTab>布局2</LayoutTab>
            <HorizontalScroll>
              <Splitter />
              <Arrow to="left" />
              <Spacer $grow={40} />
              <Thumb $flat />
              <Spacer $grow={61} />
              <Arrow to="right" />
            </HorizontalScroll>
          </TabBar>

          <ScaleBar>
            <AxisButton $width={41} $on>
              <Icon name="axes2d" size={16} />
              2D
            </AxisButton>
            <AxisButton $width={38}>
              <Icon name="axes3d" size={16} />
              3D
            </AxisButton>
            <ScaleLabel $width={90} htmlFor="exaggeration">垂直比例放大:</ScaleLabel>
            <SelectBox $width={44}>
              <select id="exaggeration">
                <option>1x</option>
              </select>
              <Arrow to="down" color="#000" />
            </SelectBox>
            <ScaleButton $width={66} $on>
              命令
            </ScaleButton>
            <RightTools>
              <ScaleButton $width={22} $on aria-label="提示">
                <Icon name="warning" size={17} />
              </ScaleButton>
              <ScaleLabel $width={85} htmlFor="view-scale">视图比例尺 1:</ScaleLabel>
              <SelectBox $width={68}>
                <select id="view-scale">
                  <option>5.55142</option>
                </select>
                <Arrow to="down" color="#000" />
              </SelectBox>
              <ScaleButton $width={22} $on aria-label="锁定">
                <Icon name="lock" size={16} />
              </ScaleButton>
              <MarkerGroup>
                <button aria-label="坐标系">
                  <Icon name="globe" size={16} />
                </button>
                <button aria-label="灯泡">
                  <Icon name="bulb" size={16} />
                </button>
              </MarkerGroup>
              <ScaleButton $width={12} aria-label="更多">
                <Arrow to="down" size={7} color="#000" />
              </ScaleButton>
            </RightTools>
          </ScaleBar>

          <Command onSubmit={(e) => e.preventDefault()}>
            <CommandGrip />
            <CommandLines>
              <History>命令: *取消*</History>
              <Prompt>
                <label htmlFor="command">命令:</label>
                <input id="command" autoComplete="off" />
              </Prompt>
            </CommandLines>
          </Command>
        </Main>

        <Side>
          <SideTabs>
            <SideTab $active>
              <span>显示管理器</span>
            </SideTab>
            <SideTab>
              <span>地图管理器</span>
            </SideTab>
            <SideTab>
              <span>地图册</span>
            </SideTab>
            <SideTab>
              <span>勘测</span>
            </SideTab>
          </SideTabs>
          <Pane>
            <PaneTitle>任务窗格</PaneTitle>
            <PaneBody>
              <MapField>
                <label htmlFor="map">当前的地图:</label>
                <select id="map">
                  <option>默认</option>
                </select>
              </MapField>
              <PaneTools>
                <PaneTool>
                  <Icon name="dataStore" size={23} />
                  数据
                </PaneTool>
                <PaneTool disabled>
                  <Icon name="brush" size={23} />
                  样式
                </PaneTool>
                <PaneTool disabled>
                  <Icon name="table" size={23} />表
                </PaneTool>
                <PaneTool>
                  <Icon name="tools" size={23} />
                  工具
                </PaneTool>
              </PaneTools>
              <PaneModes>
                <GroupButton>
                  <Icon name="group" size={18} />组
                </GroupButton>
                <OrderButton>
                  <Icon name="layers" size={18} />
                  绘图顺序
                </OrderButton>
              </PaneModes>
              <Tree>
                <TreeItem>
                  <span />
                  <svg width="13" height="8">
                    <path d="M1 1H12L7 7Z" fill="#8fc4e4" stroke="#3b6fa5" />
                  </svg>
                  <Check type="checkbox" id="library" defaultChecked />
                  <label htmlFor="library">地图库</label>
                </TreeItem>
                <TreeItem $child>
                  <span />
                  <Check type="checkbox" id="default-map" />
                  <label htmlFor="default-map">默认</label>
                </TreeItem>
              </Tree>
            </PaneBody>
          </Pane>
        </Side>
      </Workspace>

      <StatusBar>
        <Coordinates>3030.0889, 1314.9228, 0.0000</Coordinates>
        {statusTools.map(([name, on]) => (
          <StatusButton key={name} $on={on} aria-label={name}>
            <Icon name={name} size={17} />
          </StatusButton>
        ))}
        <StatusGap $width={1} />
        <StatusRight>
          <StatusButton $width={30}>模型</StatusButton>
          <StatusButton aria-label="图纸">
            <Icon name="modelSpace" size={16} />
          </StatusButton>
          <StatusButton aria-label="视口">
            <Icon name="viewports" size={17} />
          </StatusButton>
          <StatusGap $width={24} />
          <StatusButton aria-label="工作空间">
            <Icon name="gear" size={17} />
          </StatusButton>
          <StatusButton aria-label="解锁">
            <Icon name="unlock" size={17} />
          </StatusButton>
          <StatusButton aria-label="硬件加速">
            <Icon name="hardware" size={17} />
          </StatusButton>
          <StatusGap $width={8} />
        </StatusRight>
      </StatusBar>
    </Page>
  );
}
